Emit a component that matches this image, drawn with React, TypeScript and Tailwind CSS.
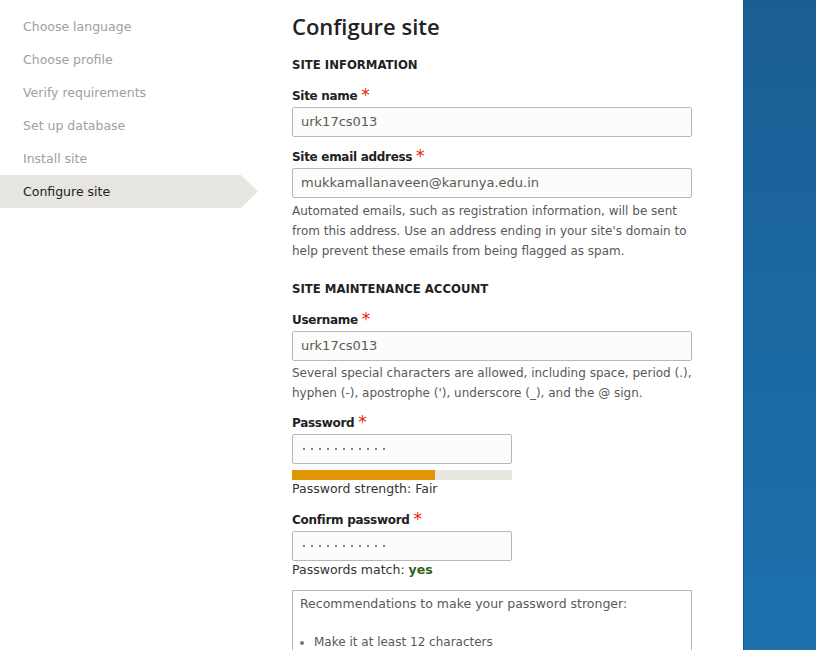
const steps = [
  'Choose language',
  'Choose profile',
  'Verify requirements',
  'Set up database',
  'Install site',
]

function Label({ text }: { text: string }) {
  return (
    <div className="h-[18px] leading-[18px] text-[12px] tracking-[-0.3px] font-bold text-[#222]">
      {text}{' '}
      <span className="relative top-[1px] text-[17px] leading-none font-normal text-[#e62600]">*</span>
    </div>
  )
}

function Input({ value }: { value: string }) {
  return (
    <div className="mt-[3px] h-[30px] w-[400px] border border-[#b8b8b8] rounded-[2px] bg-[#fcfcfa] px-[8px] text-[13px] leading-[28px] text-[#595959]">
      {value}
    </div>
  )
}

function Dots() {
  return (
    <div className="mt-[3px] h-[30px] w-[220px] border border-[#b8b8b8] rounded-[2px] bg-[#fcfcfa] pl-[10px] flex items-center gap-[6px]">
      {Array.from({ length: 11 }).map((_, i) => (
        <span key={i} className="w-[2px] h-[2px] rounded-full bg-[#555]" />
      ))}
    </div>
  )
}

export default function App() {
  return (
    <div className="flex h-[650px] w-full overflow-hidden bg-white font-['DejaVu_Sans',sans-serif]">
      <nav className="w-[258px] shrink-0 pt-[10px]">
        {steps.map((s) => (
          <div key={s} className="h-[33px] leading-[33px] pl-[23px] text-[12.5px] text-[#a0a0a0]">
            {s}
          </div>
        ))}
        <div className="relative h-[33px] w-[258px]">
          <svg className="absolute inset-0" width="258" height="33" viewBox="0 0 258 33">
            <polygon points="0,0 241,0 258,16.5 241,33 0,33" fill="#e7e5e0" />
          </svg>
          <div className="relative leading-[33px] pl-[23px] text-[12.5px] text-[#222]">Configure site</div>
        </div>
      </nav>

      <main className="w-[485px] shrink-0 pl-[34px] pt-[11px]">
        <h1 className="h-[30px] leading-[30px] text-[22px] text-[#222] font-['Open_Sans',sans-serif] font-semibold">
          Configure site
        </h1>

        <h2 className="mt-[15px] h-[18px] leading-[18px] text-[11.7px] font-bold uppercase text-[#222]">
          Site information
        </h2>

        <div className="mt-[12px]">
          <Label text="Site name" />
          <Input value="urk17cs013" />
        </div>

        <div className="mt-[10px]">
          <Label text="Site email address" />
          <Input value="mukkamallanaveen@karunya.edu.in" />
          <p className="mt-[3px] w-[404px] text-[12px] leading-[20px] text-[#595959]">
            Automated emails, such as registration information, will be sent from this address. Use an
            address ending in your site's domain to help prevent these emails from being flagged as spam.
          </p>
        </div>

        <h2 className="mt-[19px] h-[18px] leading-[18px] text-[11.7px] font-bold uppercase text-[#222]">
          Site maintenance account
        </h2>

        <div className="mt-[12px]">
          <Label text="Username" />
          <Input value="urk17cs013" />
          <p className="mt-[2px] w-[404px] text-[12px] leading-[20px] text-[#595959]">
            Several special characters are allowed, including space, period (.), hyphen (-), apostrophe
            ('), underscore (_), and the @ sign.
          </p>
        </div>

        <div className="mt-[10px]">
          <Label text="Password" />
          <Dots />
          <div className="mt-[6px] h-[10px] w-[220px] bg-[#e8e6e1]">
            <div className="h-full w-[143px] bg-[#e09600]" />
          </div>
          <div className="h-[18px] leading-[18px] text-[12.5px] text-[#333]">Password strength: Fair</div>
        </div>

        <div className="mt-[12px]">
          <Label text="Confirm password" />
          <Dots />
          <div className="h-[18px] leading-[18px] text-[12.5px] text-[#333]">
            Passwords match: <span className="font-bold text-[#325e1c]">yes</span>
          </div>
        </div>

        <div className="mt-[11px] w-[400px] h-[120px] border border-[#b8b8b8] px-[7px] pt-[3px] text-[#595959]">
          <div className="leading-[20px] text-[12.5px]">Recommendations to make your password stronger:</div>
          <ul className="mt-[18px] list-disc pl-[14px] text-[12px] marker:text-[#777]">
            <li className="leading-[20px]">Make it at least 12 characters</li>
          </ul>
        </div>
      </main>

      <div className="flex-1 bg-gradient-to-b from-[#1a5f94] to-[#1c71ad] border-l border-[#175a8a]" />
    </div>
  )
}
